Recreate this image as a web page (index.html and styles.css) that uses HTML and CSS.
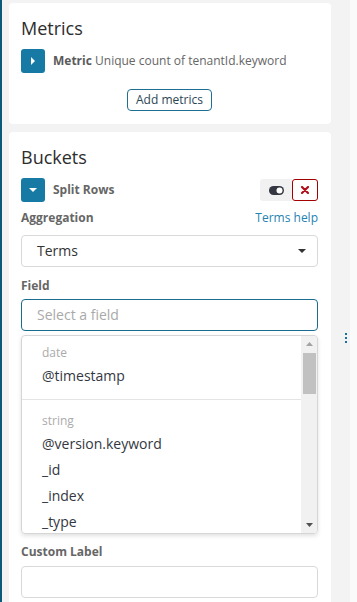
FILE: index.html
```html
<!DOCTYPE html>
<html lang="en">
<head>
<meta charset="utf-8">
<title>Visualize editor</title>
<link rel="stylesheet" href="styles.css">
</head>
<body>
<div class="app">
  <div class="edge"></div>
  <div class="sidebar">
    <section class="panel">
      <h2 class="title">Metrics</h2>
      <div class="agg-row">
        <span class="agg-toggle"><svg width="4" height="8" viewBox="0 0 4 8"><path d="M0 0L4 4L0 8Z" fill="#fff"/></svg></span>
        <div class="agg-desc"><b>Metric</b> Unique count of tenantId.keyword</div>
      </div>
      <div class="add-wrap"><span class="add-btn">Add metrics</span></div>
    </section>
    <section class="panel">
      <h2 class="title">Buckets</h2>
      <div class="agg-row agg-row-buckets">
        <span class="agg-toggle"><svg width="8" height="4" viewBox="0 0 8 4"><path d="M0 0H8L4 4Z" fill="#fff"/></svg></span>
        <div class="agg-name">Split Rows</div>
        <div class="agg-actions">
          <span class="act act-toggle"><svg width="15" height="9" viewBox="0 0 15 9"><rect x="0" y="0" width="15" height="9" rx="4.5" fill="#343741"/><circle cx="10.5" cy="4.5" r="3" fill="#fff"/></svg></span>
          <span class="act act-remove"><svg width="8" height="8" viewBox="0 0 8 8"><path d="M1 1L7 7M7 1L1 7" stroke="#b0101a" stroke-width="2.2" stroke-linecap="round"/></svg></span>
        </div>
      </div>
      <div class="label-row label-agg"><span class="label">Aggregation</span><span class="link">Terms help</span></div>
      <div class="select">
        <span class="select-text">Terms</span>
        <svg width="8" height="4" viewBox="0 0 8 4"><path d="M0 0H8L4 4Z" fill="#333"/></svg>
      </div>
      <div class="label-row label-field"><span class="label">Field</span></div>
      <div class="input input-focused"><span class="placeholder">Select a field</span></div>
      <div class="dropdown">
        <div class="list">
          <div class="group group-first">
            <div class="group-h">date</div>
            <div class="opt">@timestamp</div>
          </div>
          <div class="group group-next">
            <div class="group-h">string</div>
            <div class="opt">@version.keyword</div>
            <div class="opt">_id</div>
            <div class="opt">_index</div>
            <div class="opt">_type</div>
          </div>
        </div>
        <div class="scrollbar">
          <div class="sb-btn"><svg width="7" height="4" viewBox="0 0 7 4"><path d="M0 4H7L3.5 0Z" fill="#a3a3a3"/></svg></div>
          <div class="sb-thumb"></div>
          <div class="sb-space"></div>
          <div class="sb-btn"><svg width="7" height="4" viewBox="0 0 7 4"><path d="M0 0H7L3.5 4Z" fill="#505050"/></svg></div>
        </div>
      </div>
      <div class="label-row label-custom"><span class="label">Custom Label</span></div>
      <div class="input"></div>
    </section>
  </div>
  <div class="handle"><span class="dot"></span><span class="dot"></span><span class="dot"></span></div>
  <div class="vis"></div>
</div>
</body>
</html>
```
FILE: styles.css
```css
html, body {
  margin: 0;
  padding: 0;
}
body {
  font-family: "Open Sans", "Liberation Sans", sans-serif;
  color: #333;
  background: #fafafa;
}
.app {
  display: flex;
  height: 602px;
  overflow: hidden;
}
.edge {
  width: 2px;
  flex: none;
  background: #0c5a7a;
}
.sidebar {
  width: 329px;
  flex: none;
  box-sizing: border-box;
  padding: 3px 0 0 7px;
  background: #f3f3f3;
}
.panel {
  background: #fff;
  border-radius: 4px;
  padding: 13px 13px 13px 12px;
  margin-bottom: 8px;
}
.title {
  margin: 0 0 9px;
  font-size: 18px;
  line-height: 24px;
  font-weight: 400;
  color: #2d2d2d;
}
.agg-row {
  display: flex;
  align-items: center;
  height: 24px;
  gap: 8px;
}
.agg-toggle {
  width: 24px;
  height: 24px;
  flex: none;
  border-radius: 3px;
  background: #167aa5;
  display: flex;
  align-items: center;
  justify-content: center;
}
.agg-desc {
  font-size: 12px;
  line-height: 16px;
  color: #666;
  white-space: nowrap;
}
.agg-desc b {
  font-weight: 700;
  color: #5a5a5a;
}
.add-wrap {
  margin-top: 16px;
  display: flex;
  justify-content: center;
}
.add-btn {
  display: block;
  height: 20px;
  line-height: 20px;
  padding: 0 8px;
  border: 1px solid #1f6f93;
  border-radius: 4px;
  font-size: 12px;
  color: #2d4656;
}
.agg-row-buckets {
  margin-bottom: 8px;
}
.agg-name {
  font-size: 12px;
  line-height: 16px;
  font-weight: 700;
  color: #666;
}
.agg-actions {
  margin-left: auto;
  display: flex;
  height: 22px;
}
.act {
  height: 22px;
  box-sizing: border-box;
  display: flex;
  align-items: center;
  justify-content: center;
}
.act-toggle {
  width: 32px;
  background: #f1f1f1;
  border-radius: 3px 0 0 3px;
}
.act-remove {
  width: 26px;
  border: 1px solid #a30000;
  border-radius: 3px;
  background: #fff;
}
.label-row {
  display: flex;
  justify-content: space-between;
  align-items: baseline;
  font-size: 12px;
  line-height: 16px;
}
.label {
  font-weight: 700;
  color: #666;
}
.link {
  color: #2483b3;
}
.label-agg { margin-bottom: 9px; }
.label-field { margin-bottom: 5px; }
.label-custom { margin-bottom: 6px; }
.select {
  height: 32px;
  box-sizing: border-box;
  border: 1px solid #d9d9d9;
  border-radius: 4px;
  display: flex;
  align-items: center;
  justify-content: space-between;
  padding: 0 11px 0 15px;
  margin-bottom: 11px;
}
.select-text {
  font-size: 14px;
  line-height: 30px;
  color: #333;
}
.input {
  height: 32px;
  box-sizing: border-box;
  border: 1px solid #d9d9d9;
  border-radius: 4px;
  padding: 0 15px;
  font-size: 14px;
  line-height: 30px;
}
.input-focused {
  border-color: #1a6d90;
  margin-bottom: 4px;
}
.placeholder {
  color: #a9a9a9;
}
.dropdown {
  height: 199px;
  box-sizing: border-box;
  border: 1px solid #d6d6d6;
  border-radius: 4px;
  box-shadow: 0 2px 4px rgba(0, 0, 0, 0.12);
  display: flex;
  overflow: hidden;
  margin-bottom: 10px;
}
.list {
  flex: 1;
  overflow: hidden;
}
.group {
  padding-left: 20px;
}
.group-first {
  padding-top: 7px;
  padding-bottom: 10px;
  border-bottom: 1px solid #e4e4e4;
}
.group-next {
  padding-top: 11px;
}
.group-h {
  font-size: 12px;
  line-height: 20px;
  color: #ababab;
}
.opt {
  font-size: 14px;
  line-height: 26px;
  color: #343741;
  white-space: nowrap;
}
.scrollbar {
  width: 16px;
  flex: none;
  background: #f1f1f1;
  display: flex;
  flex-direction: column;
}
.sb-btn {
  height: 16px;
  flex: none;
  display: flex;
  align-items: center;
  justify-content: center;
  padding-left: 1px;
}
.sb-thumb {
  height: 41px;
  margin: 1px 1px 0 2px;
  background: #c1c1c1;
}
.sb-space {
  flex: 1;
}
.handle {
  width: 19px;
  flex: none;
  background: #f3f3f3;
  box-sizing: border-box;
  padding: 333px 0 0 14px;
  display: flex;
  flex-direction: column;
  gap: 2px;
}
.dot {
  width: 2px;
  height: 2px;
  background: #1a6fa0;
}
.vis {
  flex: 1;
  background: #fafafa;
}
```
